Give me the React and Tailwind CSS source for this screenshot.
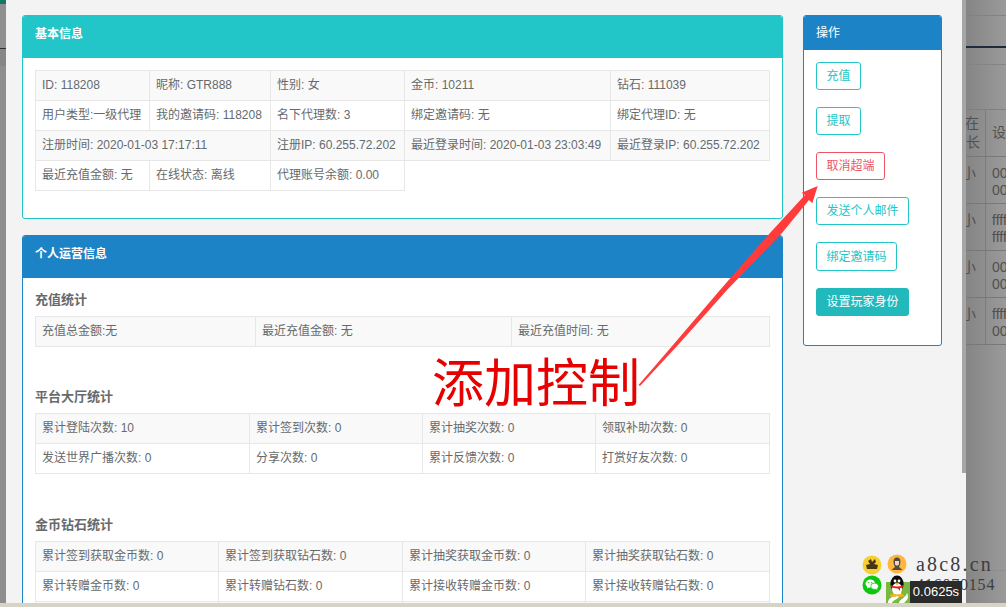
import React from 'react'

const font = { fontFamily: '"Liberation Sans", "Noto Sans CJK SC", sans-serif' }

const basicRows = [
  [['ID: 118208'], ['昵称: GTR888'], ['性别: 女'], ['金币: 10211'], ['钻石: 111039']],
  [['用户类型:一级代理'], ['我的邀请码: 118208'], ['名下代理数: 3'], ['绑定邀请码: 无'], ['绑定代理ID: 无']],
  [['注册时间: 2020-01-03 17:17:11', 2], ['注册IP: 60.255.72.202'], ['最近登录时间: 2020-01-03 23:03:49'], ['最近登录IP: 60.255.72.202']],
  [['最近充值金额: 无'], ['在线状态: 离线'], ['代理账号余额: 0.00']],
]

const rechargeRows = [[['充值总金额:无'], ['最近充值金额: 无'], ['最近充值时间: 无']]]

const lobbyRows = [
  [['累计登陆次数: 10'], ['累计签到次数: 0'], ['累计抽奖次数: 0'], ['领取补助次数: 0']],
  [['发送世界广播次数: 0'], ['分享次数: 0'], ['累计反馈次数: 0'], ['打赏好友次数: 0']],
]

// 第三行被窗口底部切掉了，只露出上边框
const coinRows = [
  [['累计签到获取金币数: 0'], ['累计签到获取钻石数: 0'], ['累计抽奖获取金币数: 0'], ['累计抽奖获取钻石数: 0']],
  [['累计转赠金币数: 0'], ['累计转赠钻石数: 0'], ['累计接收转赠金币数: 0'], ['累计接收转赠钻石数: 0']],
  [[''], [''], [''], ['']],
]

const InfoTable = ({ cols, rows }) => (
  <table className="w-[734px] table-fixed border-collapse text-[12px] text-[#676a6c]">
    <colgroup>
      {cols.map((col, i) => <col key={i} className={col} />)}
    </colgroup>
    <tbody>
      {rows.map((row, r) => (
        <tr key={r} className={r % 2 === 0 ? 'bg-[#f9f9f9]' : 'bg-white'}>
          {row.map(([text, span], c) => (
            <td key={c} colSpan={span || 1} className="h-[30px] border border-[#e7e7e7] pl-[6px] pr-0 pt-0 pb-[1px] whitespace-nowrap overflow-hidden">
              {text}
            </td>
          ))}
        </tr>
      ))}
    </tbody>
  </table>
)

const Card = ({ title, header, border, className, children }) => (
  <div className={`rounded-[3px] overflow-hidden border bg-white ${border} ${className}`}>
    <div className={`h-[43px] -mx-px -mt-px px-[13px] pt-[10px] text-[12px] font-bold text-white ${header}`}>{title}</div>
    {children}
  </div>
)

const SectionTitle = ({ children, className }) => (
  <h5 className={`text-[13px] leading-[16px] font-bold text-[#676a6c] ${className}`}>{children}</h5>
)

const ActionButton = ({ children, className }) => (
  <button className={`px-[9.5px] rounded-[3px] border text-[12px] leading-none whitespace-nowrap ${className}`}>
    {children}
  </button>
)

const BackRow = ({ name, second }) => (
  <div className="grid grid-cols-[20px_1fr] h-[47px] border-b border-[#787878] text-[14px] leading-[17px] text-[#505050]">
    <div className="border-r border-[#7c7c7c] pt-[8px] -indent-[4px]">{name}</div>
    <div className="pl-[6px] pt-[8px] overflow-hidden whitespace-nowrap">
      <div>{second[0]}</div>
      <div>{second[1]}</div>
    </div>
  </div>
)

// 遮罩后面的页面，只露出右边一条
const BackPage = () => (
  <div className="flex-1 overflow-hidden flex flex-col bg-gradient-to-r from-[#858585] to-[#9a9a9a]">
    <div className="h-[16px] border-b border-[#828282]" />
    <div className="h-[32px] border-b-2 border-[#1e2b3a]" />
    <div className="h-[17px] border-b border-[#848484]" />
    <div className="h-[45px] border-b border-[#7f7f7f]" />
    <div className="grid grid-cols-[20px_1fr] h-[47px] border-b border-[#787878] text-[14px] leading-[19px] text-[#505050]">
      <div className="border-r border-[#7c7c7c] pt-[4px] -indent-[1px]">在<br />长</div>
      <div className="pl-[6px] pt-[13px] whitespace-nowrap overflow-hidden">设置</div>
    </div>
    <BackRow name="小" second={['000000', '000000']} />
    <BackRow name="小" second={['ffffff', 'ffffff']} />
    <BackRow name="小" second={['000000', '000000']} />
    <BackRow name="小" second={['ffffff', '000000']} />
    <div className="h-[226px] border-b border-[#8e8e8e]" />
  </div>
)

const Watermark = () => (
  <div className="absolute left-[862px] top-[554px] w-[144px] h-[49px]">
    <svg className="absolute left-0 top-[1px]" width="20" height="20" viewBox="0 0 20 20">
      <circle cx="10" cy="10" r="9.5" fill="#f6d031" />
      <path d="M6 6 L9 4 L10 7 L13 4 L14 7 L12 9 L16 10 L15 14 L5 14 L4 10 L8 9 Z" fill="#4a3512" />
    </svg>
    <svg className="absolute left-[25px] top-0" width="20" height="20" viewBox="0 0 20 20">
      <circle cx="10" cy="10" r="9.5" fill="#ffb63d" />
      <path d="M10 3.5 C13 3.5 13.6 6 13.4 8.5 C13.2 11 12 12.5 12 13 L15.5 16 L4.5 16 L8 13 C8 12.5 6.8 11 6.6 8.5 C6.4 6 7 3.5 10 3.5 Z" fill="#4f4a45" />
      <path d="M8 7 H12 V10.5 C11 12 9 12 8 10.5 Z" fill="#e9d7c0" />
    </svg>
    <svg className="absolute left-0 top-[21px]" width="20" height="20" viewBox="0 0 20 20">
      <circle cx="10" cy="10" r="9.5" fill="#0dc70d" />
      <ellipse cx="8.3" cy="8.6" rx="4.8" ry="4" fill="#fff" />
      <path d="M5.5 11 L5 13.4 L7.6 12 Z" fill="#fff" />
      <ellipse cx="12.6" cy="11.3" rx="3.9" ry="3.2" fill="#fff" stroke="#0dc70d" strokeWidth="0.8" />
      <path d="M14 13.6 L15.2 15.2 L15.1 13 Z" fill="#fff" />
      <circle cx="6.7" cy="7.6" r="0.7" fill="#0dc70d" />
      <circle cx="9.7" cy="7.6" r="0.7" fill="#0dc70d" />
    </svg>
    <div className="absolute left-[54px] top-0 font-['Liberation_Serif',serif] text-[20px] leading-[21px] tracking-[2.2px] text-[#3d3d3d] whitespace-nowrap">a8c8.cn</div>
    <div className="absolute left-[54px] top-[21px] font-['Liberation_Serif',serif] text-[16px] leading-[20px] tracking-[0.8px] text-[#3d3d3d] whitespace-nowrap">416070154</div>
    <div className="absolute left-[24px] top-[28px] w-[24px] h-[21px] bg-[#7ab844] overflow-hidden">
      <svg width="24" height="21" viewBox="0 0 24 21">
        <path d="M2 21 C2 13 14 15 14 9 C18 13 12 16 9 18 C7 19 6 20 6 21 Z" fill="#fff" />
        <path d="M13 21 C13 17 20 16 21 11 C24 16 20 19 18 21 Z" fill="#fff" />
      </svg>
    </div>
    <div className="absolute left-[48px] top-[27px] w-[52px] h-[22px] bg-[#2b2b2b] text-white text-[13px] leading-[22px] text-center" style={font}>0.0625s</div>
    <svg className="absolute left-[25px] top-[21px]" width="20" height="22" viewBox="0 0 20 22">
      <ellipse cx="10" cy="9" rx="6.6" ry="8.5" fill="#0b0b0b" />
      <ellipse cx="10" cy="14" rx="5" ry="6" fill="#fff" />
      <circle cx="8" cy="6" r="1.4" fill="#fff" />
      <circle cx="12" cy="6" r="1.4" fill="#fff" />
      <path d="M7.5 8 Q10 6.8 12.5 8 L10 10 Z" fill="#f6b21b" />
      <path d="M4 10 Q10 13 16 10 L16 12.4 L13 13 L13 16 L11 13.4 Q7 13.6 4 12 Z" fill="#e0201b" />
      <ellipse cx="6.6" cy="20.4" rx="3.6" ry="1.4" fill="#f6b21b" />
      <ellipse cx="13.4" cy="20.4" rx="3.6" ry="1.4" fill="#f6b21b" />
    </svg>
  </div>
)

const App = () => {
  return (
    <div className="relative w-[1006px] h-[607px] overflow-hidden bg-[#d6d4c6]" style={font}>
      <div className="flex h-[603px]">
        <div className="w-[6px] flex flex-col bg-[#8f8f8f]">
          <div className="h-[4px] bg-[#0f7a62]" />
          <div className="h-[3px]" />
          <div className="h-[42px] border-b border-[#2c3138]" />
          <div className="h-[17px] bg-[#868686]" />
          <div className="flex-1 bg-[#8e8e8e]" />
        </div>

        <div className="w-[960px] flex bg-[#f3f3f3] overflow-hidden">
          <div className="w-[956px] shrink-0 pl-[16px] pt-[15px] flex items-start gap-[20px]">
            <div className="w-[761px] shrink-0">
              <Card title="基本信息" header="bg-[#23c6c8]" border="border-[#23c6c8]" className="h-[204px] mb-[16px]">
                <div className="pl-[12px] pt-[12px]">
                  <InfoTable
                    cols={['w-[114px]', 'w-[121px]', 'w-[134px]', 'w-[206px]', 'w-[159px]']}
                    rows={basicRows}
                  />
                </div>
              </Card>

              <Card title="个人运营信息" header="bg-[#1c84c6]" border="border-[#1c84c6]" className="h-[420px]">
                <div className="pl-[12px] pt-[14px]">
                  <SectionTitle className="mb-[8px]">充值统计</SectionTitle>
                  <InfoTable cols={['w-[220px]', 'w-[256px]', 'w-[258px]']} rows={rechargeRows} />
                  <SectionTitle className="mt-[42px] mb-[8px]">平台大厅统计</SectionTitle>
                  <InfoTable cols={['w-[214px]', 'w-[173px]', 'w-[173px]', 'w-[174px]']} rows={lobbyRows} />
                  <SectionTitle className="mt-[43px] mb-[8px]">金币钻石统计</SectionTitle>
                  <InfoTable cols={['w-[183px]', 'w-[184px]', 'w-[183px]', 'w-[184px]']} rows={coinRows} />
                </div>
              </Card>
            </div>

            <div className="w-[139px] h-[331px] shrink-0 rounded-[3px] overflow-hidden border border-[#1c84c6] bg-white">
              <div className="h-[35px] -mx-px -mt-px px-[13px] pt-[9px] bg-[#1c84c6] text-[12px] text-white">操作</div>
              <div className="pl-[12px] pt-[12px] flex flex-col items-start gap-[17px]">
                <ActionButton className="h-[28px] bg-white border-[#23c6c8] text-[#23c6c8]">充值</ActionButton>
                <ActionButton className="h-[28px] bg-white border-[#23c6c8] text-[#23c6c8]">提取</ActionButton>
                <ActionButton className="h-[28px] bg-white border-[#ed5565] text-[#ed5565]">取消超端</ActionButton>
                <ActionButton className="h-[28px] bg-white border-[#23c6c8] text-[#23c6c8]">发送个人邮件</ActionButton>
                <ActionButton className="h-[29px] bg-white border-[#23c6c8] text-[#23c6c8]">绑定邀请码</ActionButton>
                <ActionButton className="h-[28px] bg-[#21b9bb] border-[#21b9bb] text-white">设置玩家身份</ActionButton>
              </div>
            </div>
          </div>
          <div className="w-[4px] shrink-0 h-[473px] bg-[#a6a6a6]" />
        </div>

        <BackPage />
      </div>

      <svg className="absolute left-0 top-0 pointer-events-none" width="1006" height="607" viewBox="0 0 1006 607">
        <polygon points="638.5,385 673,345 720,290 770,233 805,195 801.7,192.7 817.7,186 812.3,203.3 809,200 782,233 727,290 678,345 640,386" fill="#ff3b3b" />
      </svg>
      <div className="absolute left-[432px] top-[346px] text-[52px] leading-[68px] text-[#e60000] whitespace-nowrap" style={{ fontFamily: '"Noto Sans CJK SC", sans-serif' }}>
        添加控制
      </div>

      <Watermark />
    </div>
  )
}

export default App
